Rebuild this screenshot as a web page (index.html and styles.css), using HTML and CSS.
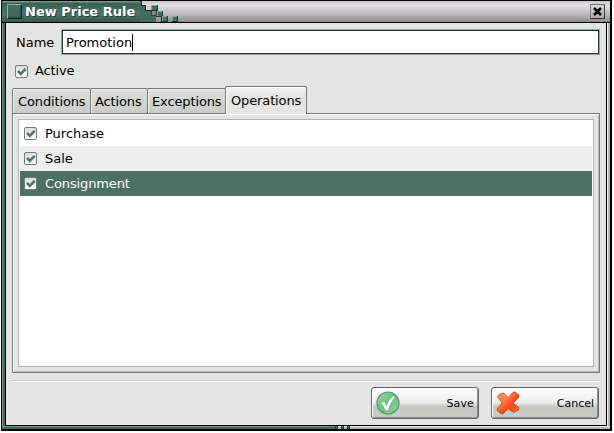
FILE: index.html
```html
<!DOCTYPE html>
<html lang="en">
<head>
<meta charset="utf-8">
<title>New Price Rule</title>
<link rel="stylesheet" href="styles.css">
</head>
<body>
<div class="window">
  <header class="titlebar">
    <span class="window-menu"></span>
    <h1 class="title">New Price Rule</h1>
    <svg class="pixels" width="40" height="21" viewBox="0 0 40 21" shape-rendering="crispEdges">
      <path d="M0 0h1v5h4v5h6v5h5v6H0z" fill="#436a5d"/>
      <path d="M1 0h1v4h4v5h5v1H5V5H1zM16 15h6v6h-1v-5h-5z" fill="#17251f"/>
      <path d="M11 9h6v6h-6z" fill="#33423c"/><path d="M12 10h4v4h-4z" fill="#858987"/>
      <path d="M11 4h7v6h-7zM17 10h6v6h-6zM22 15h6v6h-6zM32 15h6v6h-6z" fill="#1f3a30"/>
      <path d="M11 4h6v5h-6zM17 10h5v5h-5zM22 15h5v5h-5zM32 15h5v5h-5z" fill="#83a496"/>
      <path d="M12 5h5v4h-5zM18 11h4v4h-4zM23 16h4v4h-4zM33 16h4v4h-4z" fill="#456f61"/>
    </svg>
    <button class="close" aria-label="Close"><svg width="9" height="9" viewBox="0 0 9 9"><path d="M1 1l7 7M8 1L1 8" stroke="#050505" stroke-width="2.700"/></svg></button>
  </header>
  <div class="frame">
    <main class="content">
      <div class="name-row">
        <label class="name-label" for="name">Name</label>
        <div class="entry" id="name"><span>Promotion</span><i class="caret"></i></div>
      </div>
      <div class="active-row"><span class="check"><svg viewBox="0 0 11 11"><path d="M2 4.800L4.800 7.800L9.600 2.800" /></svg></span><span class="tight">Active</span></div>
      <nav class="tabs">
        <div class="tab conditions"><span>Conditions</span></div>
        <div class="tab actions"><span>Actions</span></div>
        <div class="tab exceptions"><span>Exceptions</span></div>
        <div class="tab selected"><span>Operations</span></div>
      </nav>
      <section class="panel">
        <div class="list">
          <div class="row"><span class="check"><svg viewBox="0 0 11 11"><path d="M2 4.800L4.800 7.800L9.600 2.800" /></svg></span><span>Purchase</span></div>
          <div class="row alt"><span class="check"><svg viewBox="0 0 11 11"><path d="M2 4.800L4.800 7.800L9.600 2.800" /></svg></span><span>Sale</span></div>
          <div class="row active"><span class="check"><svg viewBox="0 0 11 11"><path d="M2 4.800L4.800 7.800L9.600 2.800" /></svg></span><span class="tight">Consignment</span></div>
        </div>
      </section>
      <div class="separator"></div>
      <footer class="buttons">
        <button class="button">
          <svg width="24" height="24" viewBox="0 0 24 24">
            <defs><linearGradient id="green" x1="0" y1="0" x2="1" y2="1"><stop offset="0" stop-color="#a5dcae"/><stop offset=".45" stop-color="#6fc083"/><stop offset="1" stop-color="#8fce8d"/></linearGradient></defs>
            <circle cx="12" cy="12" r="11" fill="url(#green)" stroke="#4c9c72" stroke-width="1.200"/>
            <path d="M5.300 12.200L8.200 11l2.300 4.200Q13.200 8.500 17.500 5l1.100 1.100Q14.300 11.500 11.600 19.200H9.800Q8.200 15 5.300 12.200z" fill="#fff"/>
          </svg>
          <span class="save">Save</span>
        </button>
        <button class="button">
          <svg width="24" height="24" viewBox="0 0 24 24">
            <defs><linearGradient id="red" x1="0" y1="0" x2="1" y2="1"><stop offset="0" stop-color="#ffab78"/><stop offset=".4" stop-color="#ff7245"/><stop offset=".62" stop-color="#f94412"/><stop offset="1" stop-color="#ff7444"/></linearGradient></defs>
            <path d="M1.500 5.800L3.500 3.300L8 2.200L12 6.800L17.200 1.200L19 1L23 4.300L22.500 6.500L17 12.200L22.800 16.500V18.800L17.500 21.500L12 17.500L6.800 23L5 22.500L1.200 19.600L1.500 17.200L6.300 12z" fill="url(#red)" stroke="#c9401d" stroke-width=".9" stroke-linejoin="round"/>
          </svg>
          <span>Cancel</span>
        </button>
      </footer>
    </main>
  </div>
  <div class="bottom-edge"><i></i><i></i><i></i></div>
</div>
</body>
</html>
```
FILE: styles.css
```css
* { box-sizing: border-box; }
html, body { margin: 0; height: 433px; overflow: hidden; background: #fff; }
body { font: 13px/16px "DejaVu Sans", sans-serif; color: #000; }
span { white-space: nowrap; }
.window {
  width: 611px; height: 431px; margin-left: 1px; padding: 1px 2px 2px 1px;
  background: #000; display: flex; flex-direction: column;
}
.titlebar {
  height: 21px; display: flex; align-items: center; padding: 0 4px 0 5px;
  background: linear-gradient(#c9c7c9, #e1dfe1 20%, #b9b7b9 65%, #8c8a8c);
  position: relative;
}
.titlebar::before {
  content: ""; position: absolute; left: 0; top: 0; width: 138px; height: 21px;
  background: linear-gradient(#76988b 0 1px, #3b6053 2px, #4c7467 60%, #38584d);
}
.window-menu {
  position: relative; width: 15px; height: 15px; background: #3f6a5c;
  border: 1px solid; border-color: #91afa4 #172922 #172922 #91afa4;
  box-shadow: inset -1px -1px #2b493f;
}
.title {
  position: relative; margin: 0 0 0 3px; width: 115px; color: #fff;
  font-size: 13px; line-height: 16px; font-weight: bold; white-space: nowrap;
  text-shadow: 1px 1px #29463b;
}
.pixels { position: relative; flex: none; }
.close {
  margin-left: auto; margin-right: 1px; width: 15px; height: 15px; padding: 0; display: grid; place-items: center;
  background: linear-gradient(#ddd, #aaa); border: 1px solid; border-color: #777 #333 #333 #777;
}
.frame {
  height: 404px; padding: 1px 3px 0; border-top: 1px solid #000;
  background: linear-gradient(90deg, #6d9485 0 1px, #3f6a5c 1px 3px, #000 3px 605px, #f0f0f0 605px 606px, #b5b3b5 606px);
}
.frame { padding-top: 0; }
.content {
  height: 402px; margin: 0 0 0 1px; background: #e4e4e2; width: 600px;
  padding: 6px 6px 0; display: flex; flex-direction: column;
}
.name-row { display: flex; align-items: center; height: 26px; }
.name-label { width: 49px; padding: 2px 0 0 4px; }
.entry {
  width: 539px; height: 26px; padding: 2px 2px 0 4px; display: flex; align-items: center;
  background: #fff; border: 1px solid #8caaa0; box-shadow: inset 0 0 0 1px #2c3531;
}
.caret { width: 1px; height: 17px; margin-top: -1px; background: #000; }
.active-row { display: flex; align-items: center; height: 16px; margin-top: 8px; padding-left: 3px; }
.check {
  width: 13px; height: 13px; flex: none; margin-right: 7px; border: 1px solid #777d7a;
  border-radius: 2px; background: linear-gradient(#ddd, #fff);
}
.check svg { display: block; width: 11px; height: 11px; }
.check path { fill: none; stroke: #4c7868; stroke-width: 2.6; }
.tight { letter-spacing: -.13px; }
.tabs { height: 27px; margin-top: 7px; display: flex; align-items: flex-end; letter-spacing: -.13px; }
.tab {
  height: 25px; padding: 5px 0 0 5px; border: 1px solid #777976; border-bottom: 0;
  background: linear-gradient(#dde0db, #c8cbc6); box-shadow: inset 1px 1px #f0f1ef; border-radius: 2px 2px 0 0;
}
.conditions { width: 79px; }
.actions { width: 58px; margin-left: -1px; padding-left: 4px; }
.exceptions { width: 79px; margin-left: -1px; padding-left: 4px; }
.selected {
  width: 82px; height: 28px; margin: 0 0 -1px -1px; padding-top: 6px;
  position: relative; background: linear-gradient(#f2f2f1, #e4e4e2 10px); box-shadow: inset 1px 1px #fff;
}
.panel {
  width: 588px; height: 260px; padding: 5px; border: 1px solid #777976;
  box-shadow: inset 1px 1px #fff, inset -1px -1px #bbbcba;
}
.list { height: 248px; background: #fff; border: 1px solid #b4b5b2; padding: 1px; }
.row { height: 25px; display: flex; align-items: center; padding-left: 4px; }
.row .check { margin-right: 8px; }
.alt { background: #ededed; }
.row.active { background: #4c7063; color: #fff; }
.separator { height: 2px; margin-top: 7px; border-top: 1px solid #c7c8c5; border-bottom: 1px solid #fff; flex: none; }
.buttons { display: flex; justify-content: flex-end; gap: 12px; padding: 5px 1px 0 0; }
.button {
  width: 108px; height: 32px; padding: 0 4px; display: flex; align-items: center; justify-content: space-between;
  border: 1px solid #666963; border-radius: 3px; background: linear-gradient(#fff, #ededec 48%, #c5c7c1 62%, #cacdc7);
  box-shadow: inset 1px 1px #fff, inset -1px -1px #8d908a; color: #000;
  font: 11px/14px "DejaVu Sans", sans-serif;
}
.button span { padding-top: 1px; }
.save { letter-spacing: .15px; }
.bottom-edge {
  height: 3px; display: flex; gap: 3px; padding-left: 333px;
  background: linear-gradient(#6d9485 0 1px, #3f6a5c 1px 3px) 0 0 / 333px 3px no-repeat, linear-gradient(#f0f0f0 0 1px, #b5b3b5 1px);
}
.bottom-edge i { width: 3px; border: 1px solid #1d3029; border-width: 0 1px; background: #4c7868; }
```
